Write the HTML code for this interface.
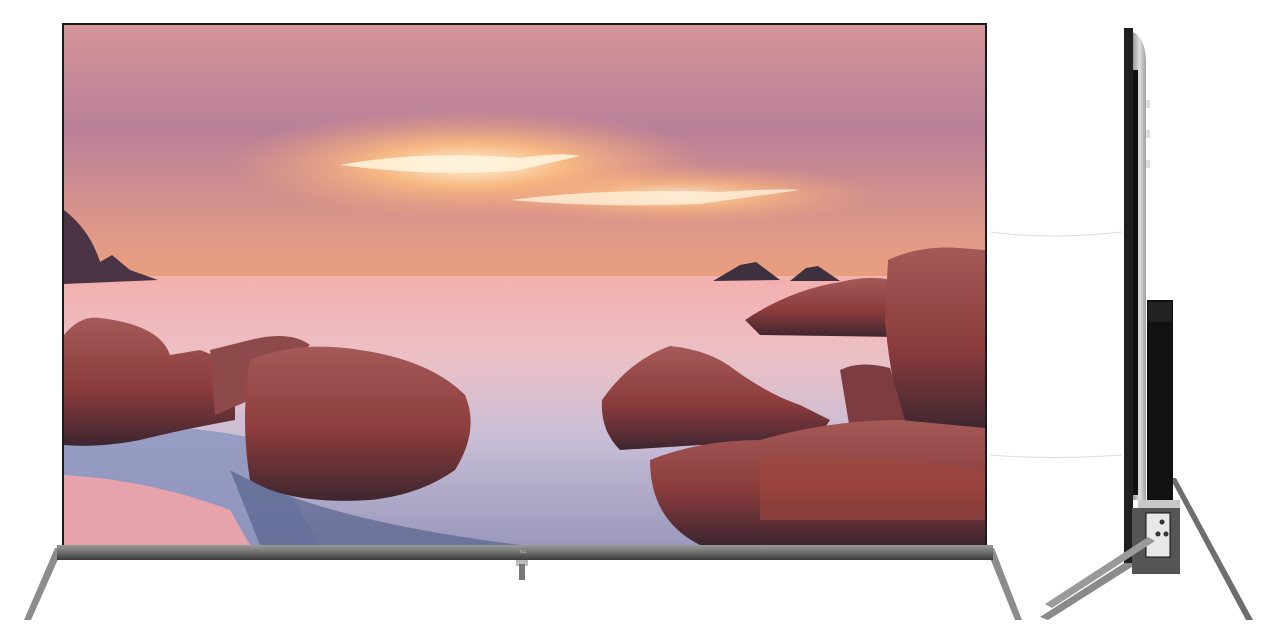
<!DOCTYPE html>
<html><head><meta charset="utf-8"><style>
html,body{margin:0;padding:0;background:#fff;width:1280px;height:642px;overflow:hidden}
svg{display:block}
</style></head><body>
<svg width="1280" height="642" viewBox="0 0 1280 642" xmlns="http://www.w3.org/2000/svg">
<defs>
<linearGradient id="sky" x1="0" y1="0" x2="0" y2="1">
<stop offset="0" stop-color="#d49498"/>
<stop offset="0.2" stop-color="#b98098"/>
<stop offset="0.42" stop-color="#e29b86"/>
<stop offset="0.6" stop-color="#f4a470"/>
<stop offset="0.8" stop-color="#f0a092"/>
<stop offset="1" stop-color="#eca2a6"/>
</linearGradient>
<linearGradient id="sea" x1="0" y1="0" x2="0" y2="1">
<stop offset="0" stop-color="#f2b0ae"/>
<stop offset="0.3" stop-color="#ecc0c6"/>
<stop offset="0.6" stop-color="#c8bed6"/>
<stop offset="1" stop-color="#9a98bc"/>
</linearGradient>
<radialGradient id="glow" cx="0.5" cy="0.5" r="0.5">
<stop offset="0" stop-color="#fff4d8"/>
<stop offset="0.4" stop-color="#ffc080" stop-opacity="0.85"/>
<stop offset="1" stop-color="#f6a37a" stop-opacity="0"/>
</radialGradient>
<linearGradient id="rock" x1="0" y1="0" x2="0" y2="1">
<stop offset="0" stop-color="#a45a58"/>
<stop offset="0.55" stop-color="#8c3c3c"/>
<stop offset="1" stop-color="#3e2630"/>
</linearGradient>
<linearGradient id="bez" x1="0" y1="0" x2="0" y2="1">
<stop offset="0" stop-color="#9a9a9a"/>
<stop offset="0.5" stop-color="#6e6e6e"/>
<stop offset="1" stop-color="#3a3a3a"/>
</linearGradient>
<linearGradient id="silver" x1="0" y1="0" x2="1" y2="0">
<stop offset="0" stop-color="#9a9a9a"/>
<stop offset="0.5" stop-color="#e0e0e0"/>
<stop offset="1" stop-color="#a0a0a0"/>
</linearGradient>
</defs>

<polygon points="55,548 63,548 31,620 24,620" fill="#8c8c8c"/>
<polygon points="986,548 994,548 1022,620 1015,620" fill="#8c8c8c"/>
<rect x="516" y="560" width="12" height="6" fill="#bbb"/>
<rect x="519" y="564" width="6" height="16" fill="#777"/>

<rect x="62" y="23" width="925" height="524" fill="#1a1a1a"/>
<rect x="64" y="25" width="921" height="520" fill="url(#sky)"/>
<ellipse cx="470" cy="165" rx="240" ry="55" fill="url(#glow)"/>
<ellipse cx="680" cy="195" rx="200" ry="30" fill="url(#glow)" opacity="0.8"/>
<path d="M340,165 Q420,150 520,158 Q560,152 580,156 L520,170 Q440,178 340,165Z" fill="#fff3dc" opacity="0.9"/>
<path d="M510,200 Q600,188 720,192 Q780,188 800,190 L700,204 Q600,208 510,200Z" fill="#fff0d8" opacity="0.8"/>
<rect x="64" y="278" width="921" height="267" fill="url(#sea)"/>
<rect x="64" y="276" width="921" height="4" fill="#f0b4ae"/>
<path d="M64,430 Q180,420 260,440 L320,545 L64,545Z" fill="#8b93bd" opacity="0.8"/>
<path d="M64,475 Q150,480 230,510 L250,545 L64,545Z" fill="#e7a3ab"/>
<path d="M230,470 Q320,520 520,545 L260,545Z" fill="#4d5a86" opacity="0.6"/>
<path d="M64,210 Q90,230 100,262 L112,255 L130,270 L158,280 L64,284Z" fill="#4a3444"/>
<path d="M713,281 L740,265 L756,262 L780,280Z" fill="#3f3040"/>
<path d="M790,281 L806,268 L818,266 L840,281Z" fill="#3f3040"/>
<path d="M64,335 Q80,315 100,318 Q160,325 170,355 L200,350 Q230,360 235,380 L235,420 Q180,430 140,440 Q100,448 64,445Z" fill="url(#rock)"/>
<path d="M210,350 L250,340 Q290,330 310,345 L250,400 L215,415Z" fill="#8e4a4b"/>
<path d="M250,360 Q300,340 360,350 Q430,360 465,395 Q480,430 455,470 Q420,495 370,500 Q290,505 250,480 Q240,420 250,360Z" fill="url(#rock)"/>
<path d="M602,400 Q630,360 670,346 Q710,350 735,370 Q770,395 800,405 L830,420 L810,450 L700,445 L620,450 Q600,430 602,400Z" fill="url(#rock)"/>
<path d="M745,320 Q790,290 840,282 Q870,275 890,280 L895,337 L760,335Z" fill="url(#rock)"/>
<path d="M888,260 Q920,245 960,248 L985,250 L985,430 L905,430 Q890,380 885,320Z" fill="url(#rock)"/>
<path d="M840,370 Q860,360 890,368 L905,420 L850,430Z" fill="#7d3c3f"/>
<path d="M650,460 Q700,440 760,440 Q830,420 900,420 L985,428 L985,545 L700,545 Q650,520 650,460Z" fill="url(#rock)"/>
<path d="M760,455 L900,460 L985,470 L985,520 L760,520Z" fill="#a04840" opacity="0.6"/>

<rect x="57" y="545" width="936" height="15" fill="url(#bez)"/>
<text x="523" y="553" font-family="Liberation Sans, sans-serif" font-size="4" fill="#ddd" text-anchor="middle">TCL</text>

<path d="M990,232 Q1050,240 1122,232" stroke="#ddd" stroke-width="1" fill="none"/>
<path d="M990,455 Q1050,460 1122,455" stroke="#ddd" stroke-width="1" fill="none"/>

<polygon points="1160,540 1168,544 1048,620 1040,617" fill="#8a8a8a"/>
<polygon points="1170,478 1176,478 1253,620 1246,620" fill="#6e6e6e"/>
<rect x="1124" y="28" width="9" height="535" fill="#1f1f1f"/>
<path d="M1133,32 Q1145,38 1146,60 L1146,500 L1133,500Z" fill="url(#silver)"/>
<rect x="1133" y="70" width="5" height="425" fill="#111"/>
<rect x="1146" y="100" width="4" height="8" fill="#ddd"/>
<rect x="1146" y="130" width="4" height="8" fill="#ddd"/>
<rect x="1146" y="160" width="4" height="8" fill="#ddd"/>
<rect x="1147" y="300" width="26" height="200" fill="#111"/>
<rect x="1148" y="302" width="24" height="20" fill="#222"/>
<rect x="1138" y="500" width="42" height="12" fill="#c8c8c8"/>
<rect x="1132" y="508" width="48" height="66" fill="#555"/>
<rect x="1146" y="513" width="24" height="44" fill="#e8e8e8" stroke="#111" stroke-width="1"/>
<circle cx="1162" cy="522" r="2.5" fill="#333"/>
<circle cx="1158" cy="534" r="2.5" fill="#333"/>
<circle cx="1166" cy="534" r="2.5" fill="#333"/>
<polygon points="1148,537 1155,541 1052,608 1045,604" fill="#9a9a9a"/>
</svg>
</body></html>
